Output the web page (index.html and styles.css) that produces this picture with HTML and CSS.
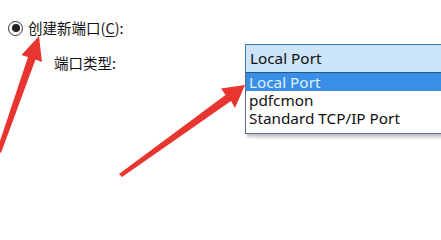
FILE: index.html
```html
<!DOCTYPE html>
<html lang="zh-CN">
<head>
<meta charset="utf-8">
<link rel="stylesheet" href="styles.css">
</head>
<body>
<div class="page">
  <div class="radio-row">
    <span class="radio"><span class="dot"></span></span>
    <span class="label">创建新端口(<u>C</u>):</span>
  </div>
  <div class="type-row">
    <span class="type-label">端口类型:</span>
    <div class="combo">
      <div class="combo-box">Local Port</div>
      <ul class="combo-list">
        <li class="selected">Local Port</li>
        <li>pdfcmon</li>
        <li>Standard TCP/IP Port</li>
      </ul>
    </div>
  </div>
  <svg class="arrows" width="441" height="240" viewBox="0 0 441 240">
    <polygon points="39,36 21.5,55 28,57 -3,150 1,153 35.5,59.5 42,62" fill="#e8352f"/>
    <polygon points="245,85 221,88.5 225.5,95 119,174 122,177 231,101 235,108" fill="#e8352f"/>
  </svg>
</div>
</body>
</html>
```
FILE: styles.css
```css
html, body {
  margin: 0;
  padding: 0;
  background: #ffffff;
}
.page {
  position: relative;
  width: 441px;
  height: 240px;
  overflow: hidden;
  font-family: "Noto Sans CJK SC", "Noto Sans", sans-serif;
  color: #111;
}
.radio-row {
  display: flex;
  align-items: center;
  gap: 5px;
  padding: 19px 0 0 8px;
  height: 18px;
}
.radio {
  width: 13px;
  height: 13px;
  border: 1.5px solid #333;
  border-radius: 50%;
  display: flex;
  align-items: center;
  justify-content: center;
  background: #fff;
  flex-shrink: 0;
}
.dot {
  width: 8px;
  height: 8px;
  border-radius: 50%;
  background: #222;
}
.label {
  font-size: 14.5px;
  line-height: 18px;
}
.label u {
  text-decoration-thickness: 1px;
  text-underline-offset: 2px;
}
.type-row {
  display: flex;
  align-items: flex-start;
  padding: 7px 0 0 54px;
}
.type-label {
  font-size: 14.5px;
  line-height: 18px;
  margin-top: 10px;
  width: 191px;
  flex-shrink: 0;
}
.combo {
  width: 230px;
  flex-shrink: 0;
  font-family: "Noto Sans", "Open Sans", sans-serif;
  font-size: 15.3px;
}
.combo-box {
  height: 27px;
  line-height: 27px;
  background: #cce4f7;
  border: 1px solid #3f79ad;
  border-bottom: 1px solid #1f5a8c;
  padding-left: 4px;
  color: #111;
}
.combo-list {
  list-style: none;
  margin: 0;
  padding: 0 0 6px 0;
  border: 1px solid #5a6f86;
  border-top: none;
  background: #fff;
  box-shadow: 2px 3px 3px rgba(0,0,0,0.25);
}
.combo-list li {
  height: 18px;
  line-height: 18px;
  padding-left: 3px;
  color: #111;
}
.combo-list li.selected {
  background: #3a8ee6;
  color: #dff0ff;
}
.arrows {
  position: absolute;
  left: 0;
  top: 0;
  pointer-events: none;
}
```
